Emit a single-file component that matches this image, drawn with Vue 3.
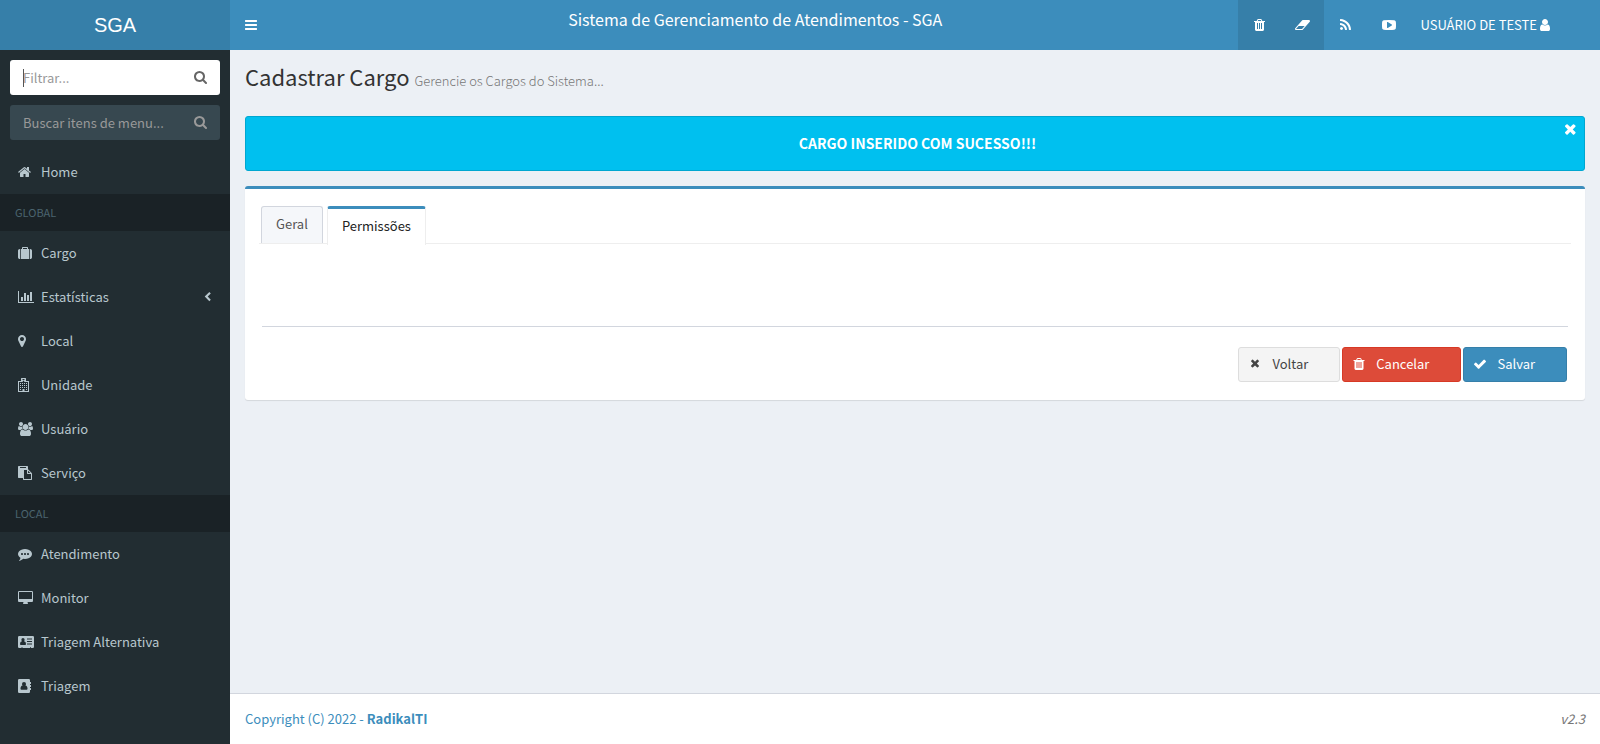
<script setup>
import { ref } from 'vue'

const icons = {
  bars: { box: '128 0 1536 1792', d: 'M1664 1344v128q0 26-19 45t-45 19h-1408q-26 0-45-19t-19-45v-128q0-26 19-45t45-19h1408q26 0 45 19t19 45zm0-512v128q0 26-19 45t-45 19h-1408q-26 0-45-19t-19-45v-128q0-26 19-45t45-19h1408q26 0 45 19t19 45zm0-512v128q0 26-19 45t-45 19h-1408q-26 0-45-19t-19-45v-128q0-26 19-45t45-19h1408q26 0 45 19t19 45z' },
  search: { box: '64 128 1664 1792', d: 'M1216 832q0-185-131.5-316.5t-316.5-131.5-316.5 131.5-131.5 316.5 131.5 316.5 316.5 131.5 316.5-131.5 131.5-316.5zm512 832q0 52-38 90t-90 38q-54 0-90-38l-343-342q-179 124-399 124-143 0-273.5-55.5t-225-150-150-225-55.5-273.5 55.5-273.5 150-225 225-150 273.5-55.5 273.5 55.5 225 150 150 225 55.5 273.5q0 220-124 399l343 343q37 37 37 90z' },
  home: { box: '64 0 1664 1792', d: 'M1472 992v480q0 26-19 45t-45 19h-384v-384h-256v384h-384q-26 0-45-19t-19-45v-480q0-1 .5-3t.5-3l575-474 575 474q1 2 1 6zm223-69l-62 74q-8 9-21 11h-3q-13 0-21-7l-692-577-692 577q-12 8-24 7-13-2-21-11l-62-74q-8-10-7-23.5t11-21.5l719-599q32-26 76-26t76 26l244 204v-195q0-14 9-23t23-9h192q14 0 23 9t9 23v408l219 182q10 8 11 21.5t-7 23.5z' },
  suitcase: { box: '0 0 1792 1792', d: 'M640 384h512v-128h-512v128zm-352 0v1280h-64q-92 0-158-66t-66-158v-832q0-92 66-158t158-66h64zm1120 0v1280h-1024v-1280h128v-160q0-40 28-68t68-28h576q40 0 68 28t28 68v160h128zm384 224v832q0 92-66 158t-158 66h-64v-1280h64q92 0 158 66t66 158z' },
  chart: { box: '0 0 2048 1792', d: 'M640 896v512h-256v-512h256zm384-512v1024h-256v-1024h256zm1024 1152v128h-2048v-1536h128v1408h1920zm-640-896v768h-256v-768h256zm384-384v1152h-256v-1152h256z' },
  marker: { box: '384 0 1024 1792', d: 'M1152 640q0-106-75-181t-181-75-181 75-75 181 75 181 181 75 181-75 75-181zm256 0q0 109-33 179l-364 774q-16 33-47.5 52t-67.5 19-67.5-19-46.5-52l-365-774q-33-70-33-179 0-212 150-362t362-150 362 150 150 362z' },
  hospital: { box: '0 0 1536 1792', d: 'M0 384h384v-320q0-64 64-64h512q64 0 64 64v320h384v1408h-1408zM128 512v1152h448v-256h256v256h448v-1152h-384v-384h-384v384zM512 192h128v96h128v-96h128v288h-128v-96h-128v96h-128zM256 640h128v128h-128zM512 640h128v128h-128zM768 640h128v128h-128zM1024 640h128v128h-128zM256 896h128v128h-128zM512 896h128v128h-128zM768 896h128v128h-128zM1024 896h128v128h-128zM256 1152h128v128h-128zM512 1152h128v128h-128zM768 1152h128v128h-128zM1024 1152h128v128h-128zM256 1408h128v128h-128zM1024 1408h128v128h-128z' },
  users: { box: '0 0 1920 1792', d: 'M593 896q-162 5-265 128h-134q-82 0-138-40.5t-56-118.5q0-353 124-353 6 0 43.5 21t97.5 42.5 119 21.5q67 0 133-23-5 37-5 66 0 159 81 256zm1071 637q0 120-73 189.5t-194 69.5h-874q-121 0-194-69.5t-73-189.5q0-53 3.5-103.5t14-109 26.5-108.5 43-97.5 62-81 85.5-53.5 111.5-20q10 0 43 21.5t73 48 107 48 135 21.5 135-21.5 107-48 73-48 43-21.5q61 0 111.5 20t85.5 53.5 62 81 43 97.5 26.5 108.5 14 109 3.5 103.5zm-1024-1277q0 106-75 181t-181 75-181-75-75-181 75-181 181-75 181 75 75 181zm704 384q0 159-112.5 271.5t-271.5 112.5-271.5-112.5-112.5-271.5 112.5-271.5 271.5-112.5 271.5 112.5 112.5 271.5zm576 225q0 78-56 118.5t-138 40.5h-134q-103-123-265-128 81-97 81-256 0-29-5-66 66 23 133 23 59 0 119-21.5t97.5-42.5 43.5-21q124 0 124 353zm-128-609q0 106-75 181t-181 75-181-75-75-181 75-181 181-75 181 75 75 181z' },
  paste: { box: '0 0 1792 1792', d: 'M768 1664h896v-640h-416q-40 0-68-28t-28-68v-416h-384v1152zm256-1440v-64q0-13-9.5-22.5t-22.5-9.5h-704q-13 0-22.5 9.5t-9.5 22.5v64q0 13 9.5 22.5t22.5 9.5h704q13 0 22.5-9.5t9.5-22.5zm256 672h299l-299-299v299zm512 128v672q0 40-28 68t-68 28h-960q-40 0-68-28t-28-68v-160h-544q-40 0-68-28t-28-68v-1344q0-40 28-68t68-28h1088q40 0 68 28t28 68v328q21 13 36 28l408 408q28 28 48 76t20 88z' },
  comment: { box: '0 0 1792 1792', d: 'M640 896q0-53-37.5-90.5t-90.5-37.5-90.5 37.5-37.5 90.5 37.5 90.5 90.5 37.5 90.5-37.5 37.5-90.5zm384 0q0-53-37.5-90.5t-90.5-37.5-90.5 37.5-37.5 90.5 37.5 90.5 90.5 37.5 90.5-37.5 37.5-90.5zm384 0q0-53-37.5-90.5t-90.5-37.5-90.5 37.5-37.5 90.5 37.5 90.5 90.5 37.5 90.5-37.5 37.5-90.5zm384 0q0 174-120 321.5t-326 233-450 85.5q-110 0-211-18-173 173-435 229-52 10-86 13-12 1-22-6t-13-18q-4-15 20-37 5-5 23.5-21.5t25.5-23.5 23.5-25.5 24-31.5 20.5-37 20-48 14.5-57.5 12.5-72.5q-146-90-229.5-216.5t-83.5-269.5q0-174 120-321.5t326-233 450-85.5 450 85.5 326 233 120 321.5z' },
  desktop: { box: '0 0 1920 1792', d: 'M1792 992v-832q0-13-9.5-22.5t-22.5-9.5h-1600q-13 0-22.5 9.5t-9.5 22.5v832q0 13 9.5 22.5t22.5 9.5h1600q13 0 22.5-9.5t9.5-22.5zm128-832v1088q0 66-47 113t-113 47h-544q0 37 16 77.5t32 71 16 43.5q0 26-19 45t-45 19h-512q-26 0-45-19t-19-45q0-14 16-44t32-70 16-78h-544q-66 0-113-47t-47-113v-1088q0-66 47-113t113-47h1600q66 0 113 47t47 113z' },
  card: { box: '0 0 2048 1792', d: 'M160 128h1728q160 0 160 160v1216q0 160-160 160h-224v-96h-128v96h-960v-96h-128v96h-288q-160 0-160-160v-1216q0-160 160-160zM640 384a210 210 0 0 0-210 210q0 110 80 190-254 20-254 380 0 110 110 110h548q110 0 110-110 0-360-254-380 80-80 80-190a210 210 0 0 0-210-210zM1152 448v128h640v-128zM1152 768v128h640v-128zM1152 1088v128h640v-128z' },
  book: { box: '0 0 1664 1792', d: 'M160 0h1216q160 0 160 160v224h96q32 0 32 32v192q0 32-32 32h-96v128h96q32 0 32 32v192q0 32-32 32h-96v128h96q32 0 32 32v192q0 32-32 32h-96v224q0 160-160 160h-1216q-160 0-160-160v-1472q0-160 160-160zM768 384a256 256 0 0 0-256 256q0 110 80 190-272 30-272 430 0 110 110 110h676q110 0 110-110 0-400-272-430 80-80 80-190a256 256 0 0 0-256-256z' },
  trash: { box: '192 0 1408 1792', d: 'M704 1376v-704q0-14-9-23t-23-9h-64q-14 0-23 9t-9 23v704q0 14 9 23t23 9h64q14 0 23-9t9-23zm256 0v-704q0-14-9-23t-23-9h-64q-14 0-23 9t-9 23v704q0 14 9 23t23 9h64q14 0 23-9t9-23zm256 0v-704q0-14-9-23t-23-9h-64q-14 0-23 9t-9 23v704q0 14 9 23t23 9h64q14 0 23-9t9-23zm-544-992h448l-48-117q-7-9-17-11h-317q-10 2-17 11zm928 32v64q0 14-9 23t-23 9h-96v948q0 83-47 143.5t-113 60.5h-832q-66 0-113-58.5t-47-141.5v-952h-96q-14 0-23-9t-9-23v-64q0-14 9-23t23-9h309l70-167q15-37 54-63t79-26h320q40 0 79 26t54 63l70 167h309q14 0 23 9t9 23z' },
  eraser: { box: '0 0 1920 1792', d: 'M896 1408l336-384h-768l-336 384h768zm1013-1077q15 34 9.5 71.5t-30.5 65.5l-896 1024q-38 44-96 44h-768q-38 0-69.5-20.5t-47.5-54.5q-15-34-9.5-71.5t30.5-65.5l896-1024q38-44 96-44h768q38 0 69.5 20.5t47.5 54.5z' },
  rss: { box: '192 0 1408 1792', d: 'M576 1344q0 80-56 136t-136 56-136-56-56-136 56-136 136-56 136 56 56 136zm512 123q2 28-17 48-18 21-47 21h-135q-25 0-43-16.5t-20-41.5q-22-229-184.5-391.5t-391.5-184.5q-25-2-41.5-20t-16.5-43v-135q0-29 21-47 17-17 43-17h5q160 13 306 80.5t259 181.5q114 113 181.5 259t80.5 306zm512 2q2 27-18 47-18 20-46 20h-143q-26 0-44.5-17.5t-19.5-42.5q-12-215-101-408.5t-231.5-336-336-231.5-408.5-102q-25-1-42.5-19.5t-17.5-43.5v-143q0-28 20-46 18-18 44-18h3q262 13 501.5 120t425.5 294q187 186 294 425.5t120 501.5z' },
  youtube: { box: '0 0 1792 1792', d: 'M1280 896q0-37-30-54l-512-320q-31-20-65-2-33 18-33 56v640q0 38 33 56 16 8 31 8 20 0 34-10l512-320q30-17 30-54zm512 0q0 96-1 150t-8.5 136.5-22.5 147.5q-16 73-69 123t-124 58q-222 25-671 25t-671-25q-71-8-124.5-58t-69.5-123q-14-65-21.5-147.5t-8.5-136.5-1-150 1-150 8.5-136.5 22.5-147.5q16-73 69-123t124-58q222-25 671-25t671 25q71 8 124.5 58t69.5 123q14 65 21.5 147.5t8.5 136.5 1 150z' },
  user: { box: '256 0 1280 1792', d: 'M1536 1399q0 109-62.5 187t-150.5 78h-854q-88 0-150.5-78t-62.5-187q0-85 8.5-160.5t31.5-152 58.5-131 94-89 134.5-34.5q131 128 313 128t313-128q76 0 134.5 34.5t94 89 58.5 131 31.5 152 8.5 160.5zm-256-887q0 159-112.5 271.5t-271.5 112.5-271.5-112.5-112.5-271.5 112.5-271.5 271.5-112.5 271.5 112.5 112.5 271.5z' },
  times: { box: '192 128 1408 1792', d: 'M1490 1322q0 40-28 68l-136 136q-28 28-68 28t-68-28l-294-294-294 294q-28 28-68 28t-68-28l-136-136q-28-28-28-68t28-68l294-294-294-294q-28-28-28-68t28-68l136-136q28-28 68-28t68 28l294 294 294-294q28-28 68-28t68 28l136 136q28 28 28 68t-28 68l-294 294 294 294q28 28 28 68z' },
  check: { box: '121 0 1550 1792', d: 'M1671 566q0 40-28 68l-724 724-136 136q-28 28-68 28t-68-28l-136-136-362-362q-28-28-28-68t28-68l136-136q28-28 68-28t68 28l294 295 656-657q28-28 68-28t68 28l136 136q28 28 28 68z' },
  angle: { box: '0 0 1024 1792', d: 'M680 250l190 190-400 400 400 400-190 190-590-590z' }
}

const home = { label: 'Home', icon: 'home' }
const groups = [
  {
    title: 'GLOBAL',
    items: [
      { label: 'Cargo', icon: 'suitcase' },
      { label: 'Estatísticas', icon: 'chart', expandable: true },
      { label: 'Local', icon: 'marker' },
      { label: 'Unidade', icon: 'hospital' },
      { label: 'Usuário', icon: 'users' },
      { label: 'Serviço', icon: 'paste' }
    ]
  },
  {
    title: 'LOCAL',
    items: [
      { label: 'Atendimento', icon: 'comment' },
      { label: 'Monitor', icon: 'desktop' },
      { label: 'Triagem Alternativa', icon: 'card' },
      { label: 'Triagem', icon: 'book' }
    ]
  }
]
const shortcuts = [
  { label: 'Limpar cache', icon: 'trash', dark: true },
  { label: 'Limpar dados', icon: 'eraser', dark: true },
  { label: 'Notícias', icon: 'rss' },
  { label: 'Vídeos', icon: 'youtube' }
]
const buttons = [
  { label: 'Voltar', icon: 'times', kind: 'plain' },
  { label: 'Cancelar', icon: 'trash', kind: 'danger' },
  { label: 'Salvar', icon: 'check', kind: 'primary' }
]
const tabs = ['Geral', 'Permissões']
const activeTab = ref('Permissões')
const alertOpen = ref(true)
</script>

<template>
  <div class="app">
    <aside class="sidebar">
      <a class="logo" href="#">SGA</a>
      <form class="search focused" @submit.prevent>
        <input type="text" placeholder="Filtrar..." aria-label="Filtrar" />
        <button type="submit" aria-label="Filtrar menu">
          <svg class="icon" :viewBox="icons.search.box"><path :d="icons.search.d" /></svg>
        </button>
      </form>
      <form class="search" @submit.prevent>
        <input type="text" placeholder="Buscar itens de menu..." aria-label="Buscar itens de menu" />
        <button type="submit" aria-label="Buscar">
          <svg class="icon" :viewBox="icons.search.box"><path :d="icons.search.d" /></svg>
        </button>
      </form>
      <nav class="menu">
        <a class="item" href="#">
          <span class="slot"><svg class="icon" :viewBox="icons[home.icon].box"><path :d="icons[home.icon].d" /></svg></span>
          <span class="label">{{ home.label }}</span>
        </a>
        <template v-for="group in groups" :key="group.title">
          <div class="group">{{ group.title }}</div>
          <a v-for="item in group.items" :key="item.label" class="item" href="#">
            <span class="slot">
              <svg class="icon" :viewBox="icons[item.icon].box"><path fill-rule="evenodd" :d="icons[item.icon].d" /></svg>
            </span>
            <span class="label">{{ item.label }}</span>
            <svg v-if="item.expandable" class="icon" :viewBox="icons.angle.box"><path :d="icons.angle.d" /></svg>
          </a>
        </template>
      </nav>
    </aside>

    <div class="page">
      <header class="navbar">
        <button class="nav-item" type="button" aria-label="Alternar menu">
          <svg class="icon" :viewBox="icons.bars.box"><path :d="icons.bars.d" /></svg>
        </button>
        <div class="app-title">Sistema de Gerenciamento de Atendimentos - SGA</div>
        <a
          v-for="s in shortcuts"
          :key="s.label"
          class="nav-item"
          :class="{ dark: s.dark }"
          href="#"
          :aria-label="s.label"
        >
          <svg class="icon" :viewBox="icons[s.icon].box"><path :d="icons[s.icon].d" /></svg>
        </a>
        <a class="user" href="#">
          <span>USUÁRIO DE TESTE</span>
          <svg class="icon" :viewBox="icons.user.box"><path :d="icons.user.d" /></svg>
        </a>
      </header>

      <main class="content">
        <div class="heading">
          <h1>Cadastrar Cargo</h1>
          <small>Gerencie os Cargos do Sistema...</small>
        </div>

        <div v-if="alertOpen" class="alert" role="alert">
          <strong>CARGO INSERIDO COM SUCESSO!!!</strong>
          <button class="close" type="button" aria-label="Fechar" @click="alertOpen = false">
            <svg class="icon" :viewBox="icons.times.box"><path :d="icons.times.d" /></svg>
          </button>
        </div>

        <section class="box">
          <div class="tabs" role="tablist">
            <button
              v-for="tab in tabs"
              :key="tab"
              type="button"
              role="tab"
              class="tab"
              :class="{ active: tab === activeTab }"
              :aria-selected="tab === activeTab"
              @click="activeTab = tab"
            >{{ tab }}</button>
          </div>
          <div class="panel" role="tabpanel"></div>
          <div class="actions">
            <button v-for="b in buttons" :key="b.label" type="button" class="btn" :class="b.kind">
              <svg class="icon" :viewBox="icons[b.icon].box"><path :d="icons[b.icon].d" /></svg>
              <span>{{ b.label }}</span>
            </button>
          </div>
        </section>
      </main>

      <footer class="footer">
        <a href="#">Copyright (C) 2022 - <strong>RadikalTI</strong></a>
        <em>v2.3</em>
      </footer>
    </div>
  </div>
</template>

<style>
body {
  background: #ecf0f5;
}
</style>

<style scoped>
.app {
  display: flex;
  min-height: 100vh;
  font: 13px/20px "Noto Sans CJK JP", "Noto Sans", sans-serif;
  color: #333;
}
.app *,
.app *::before {
  box-sizing: border-box;
}
a {
  text-decoration: none;
}
button,
input {
  font: inherit;
  border: 0;
  margin: 0;
}
button {
  cursor: pointer;
}
.icon {
  height: 14px;
  fill: currentColor;
  flex: none;
  display: block;
  overflow: visible;
}

.sidebar {
  width: 230px;
  flex: none;
  background: #222d32;
}
.logo {
  display: block;
  height: 50px;
  background: #367fa9;
  color: #fff;
  font: 20px/50px "Liberation Sans", Arial, sans-serif;
  text-align: center;
}
.search {
  position: relative;
  display: flex;
  height: 35px;
  margin: 10px;
  border-radius: 3px;
  overflow: hidden;
  background: #374850;
  color: #999;
}
.search input {
  flex: 1;
  min-width: 0;
  padding: 0 13px;
  background: transparent;
  color: inherit;
  outline: none;
}
.search input::placeholder {
  color: #999;
  opacity: 1;
}
.search button {
  padding: 0 13px;
  background: transparent;
  color: inherit;
}
.search.focused {
  background: #fff;
  color: #666;
}
.search.focused::before {
  content: "";
  position: absolute;
  left: 13px;
  top: 9px;
  width: 1px;
  height: 18px;
  background: #555;
}
.item {
  display: flex;
  align-items: center;
  padding: 12px 18px;
  color: #b8c7ce;
}
.slot {
  width: 23px;
}
.label {
  flex: 1;
}
.group {
  padding: 10px 15px;
  background: #1a2226;
  color: #4b646f;
  font-size: 11px;
  line-height: 17px;
}

.page {
  flex: 1;
  min-width: 0;
  display: flex;
  flex-direction: column;
  background: #ecf0f5;
}
.navbar {
  display: flex;
  height: 50px;
  background: #3c8dbc;
  color: #fff;
}
.nav-item {
  display: flex;
  align-items: center;
  justify-content: center;
  width: 43px;
  padding: 0;
  background: transparent;
  color: #fff;
}
button.nav-item {
  width: 42px;
}
.nav-item.dark {
  background: #367fa9;
}
.app-title {
  flex: 1;
  font-size: 16px;
  line-height: 38px;
  text-align: center;
}
.user {
  display: flex;
  align-items: center;
  gap: 3px;
  padding: 0 50px 0 10px;
  color: #fff;
}

.content {
  flex: 1;
  padding: 15px;
}
.heading {
  display: flex;
  align-items: baseline;
  gap: 5px;
  height: 51px;
}
h1 {
  margin: 0;
  font-size: 22px;
  line-height: 22px;
  font-weight: 400;
}
small {
  font-size: 13px;
  line-height: 18px;
  font-weight: 300;
  color: #777;
}
.alert {
  position: relative;
  padding: 17px 35px 17px 40px;
  margin-bottom: 15px;
  border: 1px solid #00a7d0;
  border-radius: 3px;
  background: #00c0ef;
  color: #fff;
  font-size: 14px;
  line-height: 19px;
  text-align: center;
}
.close {
  position: absolute;
  top: 5px;
  right: 7px;
  padding: 0;
  background: transparent;
  color: #fff;
}
.close .icon {
  height: 16px;
}
.box {
  border-top: 3px solid #3c8dbc;
  border-radius: 3px;
  background: #fff;
  box-shadow: 0 1px 1px rgba(0, 0, 0, 0.1);
  padding: 17px 17px 18px;
}
.tabs {
  display: flex;
  align-items: flex-end;
  gap: 4px;
  height: 38px;
  margin: 0 -3px;
  padding-left: 2px;
  border-bottom: 1px solid #eee;
}
.tab {
  height: 37px;
  padding: 0 14px 2px;
  border: 1px solid #d2d6de;
  border-bottom: 0;
  border-radius: 3px 3px 0 0;
  background: #f5f7fa;
  color: #555;
}
.tab.active {
  height: 39px;
  margin-bottom: -2px;
  border-color: #eee;
  border-top: 3px solid #3c8dbc;
  background: #fff;
  color: #222;
}
.panel {
  height: 83px;
  border-bottom: 1px solid #d2d6de;
}
.actions {
  display: flex;
  justify-content: flex-end;
  gap: 2px;
  padding: 20px 1px 0 0;
}
.btn {
  display: flex;
  align-items: center;
  gap: 11px;
  height: 35px;
  padding: 0 31px 2px 10px;
  border: 1px solid;
  border-radius: 3px;
}
.btn .icon {
  width: 12px;
}
.btn.plain .icon {
  height: 12px;
}
.plain {
  background: #f4f4f4;
  border-color: #ddd;
  color: #444;
}
.danger {
  background: #dd4b39;
  border-color: #d73925;
  color: #fff;
}
.primary {
  background: #3c8dbc;
  border-color: #367fa9;
  color: #fff;
}

.footer {
  display: flex;
  justify-content: space-between;
  padding: 15px;
  border-top: 1px solid #d2d6de;
  background: #fff;
  color: #777;
}
.footer a {
  color: #3c8dbc;
}
</style>
